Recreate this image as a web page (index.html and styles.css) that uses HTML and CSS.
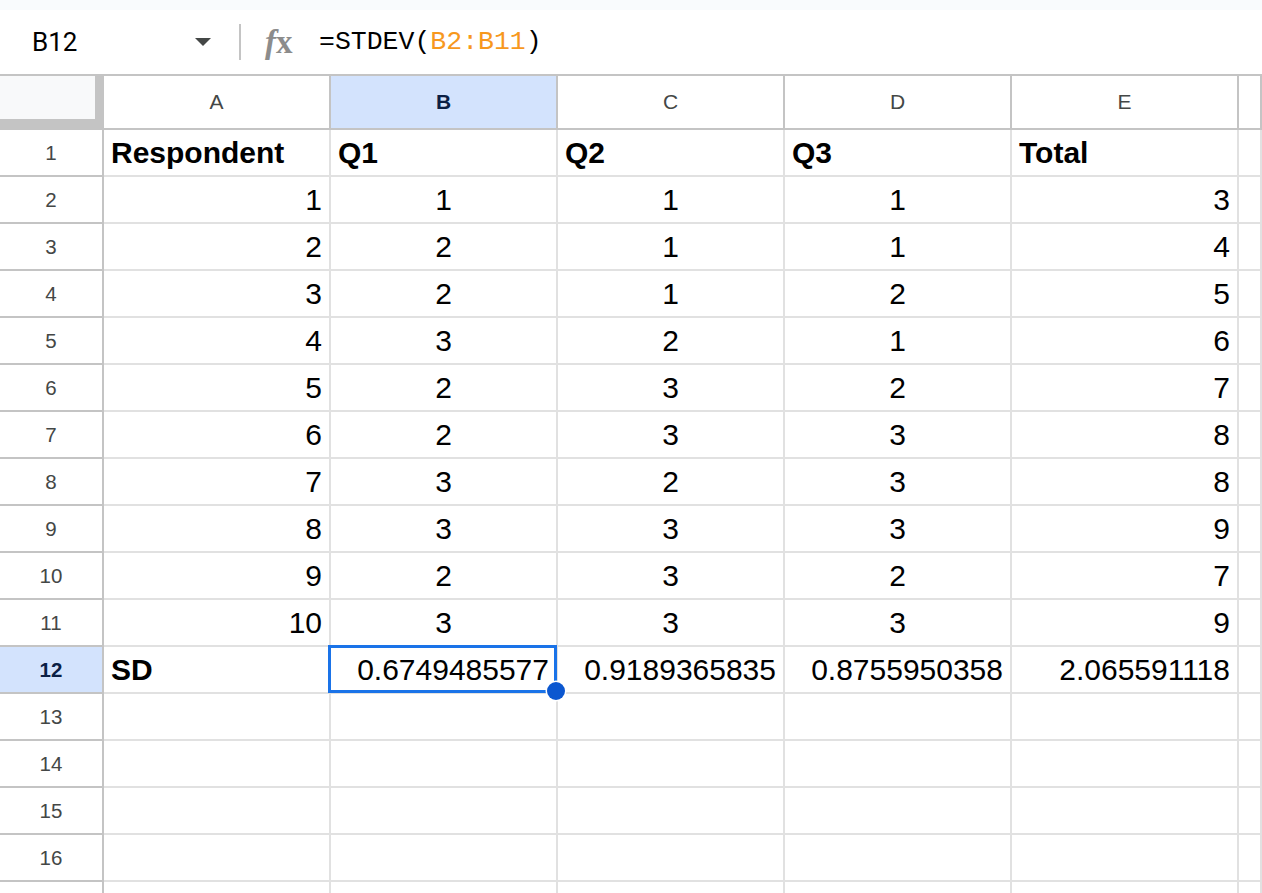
FILE: index.html
```html
<!DOCTYPE html>
<html lang="en">
<head>
    <meta charset="UTF-8">
    <title>Standard deviation</title>
    <link rel="stylesheet" href="styles.css">
</head>
<body>
    <div class="topstrip"></div>
    <div class="fbar">
        <div class="namebox">
            <span>B12</span>
            <span class="arrow"></span>
        </div>
        <div class="sep"></div>
        <div class="fx"><i>f</i>x</div>
        <div class="formula">=STDEV(<span class="ref">B2:B11</span>)</div>
    </div>

    <div class="sheet">
        <div class="corner"><div class="corner-in"></div></div>
        <div class="ch">A</div>
        <div class="ch on">B</div>
        <div class="ch">C</div>
        <div class="ch">D</div>
        <div class="ch">E</div>
        <div class="ch"></div>

        <div class="rh">1</div>
        <div class="c b">Respondent</div><div class="c b">Q1</div><div class="c b">Q2</div><div class="c b">Q3</div><div class="c b">Total</div><div class="c"></div>

        <div class="rh">2</div>
        <div class="c r">1</div><div class="c m">1</div><div class="c m">1</div><div class="c m">1</div><div class="c r">3</div><div class="c"></div>
        <div class="rh">3</div>
        <div class="c r">2</div><div class="c m">2</div><div class="c m">1</div><div class="c m">1</div><div class="c r">4</div><div class="c"></div>
        <div class="rh">4</div>
        <div class="c r">3</div><div class="c m">2</div><div class="c m">1</div><div class="c m">2</div><div class="c r">5</div><div class="c"></div>
        <div class="rh">5</div>
        <div class="c r">4</div><div class="c m">3</div><div class="c m">2</div><div class="c m">1</div><div class="c r">6</div><div class="c"></div>
        <div class="rh">6</div>
        <div class="c r">5</div><div class="c m">2</div><div class="c m">3</div><div class="c m">2</div><div class="c r">7</div><div class="c"></div>
        <div class="rh">7</div>
        <div class="c r">6</div><div class="c m">2</div><div class="c m">3</div><div class="c m">3</div><div class="c r">8</div><div class="c"></div>
        <div class="rh">8</div>
        <div class="c r">7</div><div class="c m">3</div><div class="c m">2</div><div class="c m">3</div><div class="c r">8</div><div class="c"></div>
        <div class="rh">9</div>
        <div class="c r">8</div><div class="c m">3</div><div class="c m">3</div><div class="c m">3</div><div class="c r">9</div><div class="c"></div>
        <div class="rh">10</div>
        <div class="c r">9</div><div class="c m">2</div><div class="c m">3</div><div class="c m">2</div><div class="c r">7</div><div class="c"></div>
        <div class="rh">11</div>
        <div class="c r">10</div><div class="c m">3</div><div class="c m">3</div><div class="c m">3</div><div class="c r">9</div><div class="c"></div>

        <div class="rh on">12</div>
        <div class="c b">SD</div>
        <div class="c r sel">0.6749485577<span class="sel-box"></span><span class="handle"></span></div>
        <div class="c r">0.9189365835</div><div class="c r">0.8755950358</div><div class="c r">2.065591118</div><div class="c"></div>

        <div class="rh">13</div>
        <div class="c"></div><div class="c"></div><div class="c"></div><div class="c"></div><div class="c"></div><div class="c"></div>
        <div class="rh">14</div>
        <div class="c"></div><div class="c"></div><div class="c"></div><div class="c"></div><div class="c"></div><div class="c"></div>
        <div class="rh">15</div>
        <div class="c"></div><div class="c"></div><div class="c"></div><div class="c"></div><div class="c"></div><div class="c"></div>
        <div class="rh">16</div>
        <div class="c"></div><div class="c"></div><div class="c"></div><div class="c"></div><div class="c"></div><div class="c"></div>
        <div class="rh"></div>
        <div class="c"></div><div class="c"></div><div class="c"></div><div class="c"></div><div class="c"></div><div class="c"></div>
    </div>
</body>
</html>
```

FILE: styles.css
```css
body
{
    margin: 0;
    font-family: "Liberation Sans", Arial, sans-serif;
    background: #fff;
    color: #000;
    overflow: hidden;
    height: 893px;
}
.topstrip
{
    height: 10px;
    background: #f9fbfd;
}

/* formula bar */
.fbar
{
    height: 64px;
    border-bottom: 2px solid #c4c4c4;
    display: flex;
    align-items: center;
}
.namebox
{
    width: 239px;
    box-sizing: border-box;
    padding: 0 28px 0 32px;
    display: flex;
    align-items: center;
    justify-content: space-between;
    font-family: Roboto, "Liberation Sans", sans-serif;
    font-size: 26px;
}
.arrow
{
    width: 0;
    height: 0;
    border-left: 8px solid transparent;
    border-right: 8px solid transparent;
    border-top: 8px solid #444746;
}
.sep
{
    width: 2px;
    height: 36px;
    background: #c4c4c4;
}
.fx
{
    margin-left: 24px;
    width: 54px;
    font-family: "Liberation Serif", serif;
    font-weight: bold;
    font-size: 33px;
    color: #8c8c8c;
    letter-spacing: -1px;
}
.fx i
{
    margin-right: 1px;
}
.formula
{
    font-family: "Liberation Mono", monospace;
    font-size: 26.5px;
}
.ref
{
    color: #f7981d;
}

/* grid */
.sheet
{
    display: grid;
    grid-template-columns: 104px repeat(5, 227px) 1fr;
    grid-template-rows: 54px;
    grid-auto-rows: 47px;
}
.sheet > div
{
    box-sizing: border-box;
    border-right: 2px solid #e1e1e1;
    border-bottom: 2px solid #e1e1e1;
    white-space: nowrap;
}
.corner
{
    background: #c4c4c4;
    border: none !important;
}
.corner-in
{
    width: 95px;
    height: 43px;
    background: #f8f9fa;
}
.sheet > .ch
{
    border-color: #c4c4c4;
    text-align: center;
    font-size: 21px;
    line-height: 52px;
    color: #444746;
}
.sheet > .rh
{
    border-color: #c4c4c4;
    text-align: center;
    font-size: 20.5px;
    line-height: 45px;
    color: #444746;
}
.sheet > .on
{
    background: #d3e3fd;
    color: #0b1f45;
    font-weight: bold;
}
.c
{
    font-size: 30px;
    line-height: 45px;
    padding: 0 7px;
}
.b
{
    font-weight: bold;
}
.r
{
    text-align: right;
}
.m
{
    text-align: center;
}

/* selection */
.sel
{
    position: relative;
}
.sel-box
{
    position: absolute;
    left: -3px;
    top: -2px;
    width: 229px;
    height: 48px;
    box-sizing: border-box;
    border: 3.5px solid #1a73e8;
}
.handle
{
    position: absolute;
    left: 216px;
    top: 35px;
    width: 18px;
    height: 18px;
    border-radius: 50%;
    background: #0b57d0;
    box-shadow: 0 0 0 1.5px #fff;
}
```
